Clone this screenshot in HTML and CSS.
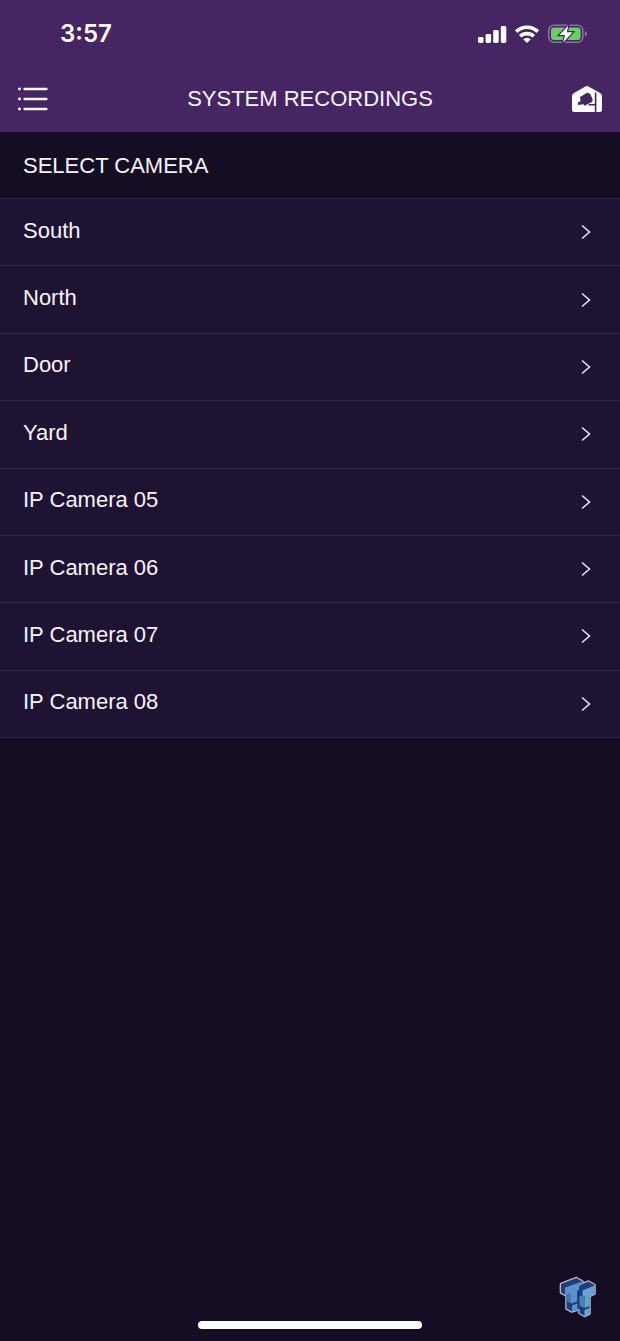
FILE: index.html
```html
<!DOCTYPE html>
<html lang="en">
<head>
<meta charset="utf-8">
<meta name="viewport" content="width=device-width, initial-scale=1">
<title>System Recordings</title>
<link rel="stylesheet" href="styles.css">
</head>
<body>
<div class="screen">
  <header class="top">
    <div class="status">
      <time class="clock">3:57</time>
      <svg class="status-icons" width="110" height="24" viewBox="0 0 110 24" aria-hidden="true">
        <g fill="#fff">
          <rect x="0" y="15" width="5.500" height="6" rx="1.400"/>
          <rect x="7.600" y="12" width="5.500" height="9" rx="1.400"/>
          <rect x="15.200" y="8" width="5.500" height="13" rx="1.400"/>
          <rect x="22.800" y="4" width="5.500" height="17" rx="1.400"/>
        </g>
        <g fill="none" stroke="#fff" stroke-width="3.600">
          <path d="M38.200 9.600A15.500 15.500 0 0 1 59.800 9.600"/>
          <path d="M42.200 14.300A10 10 0 0 1 55.800 14.300"/>
        </g>
        <path d="M49 21L45.200 17.200Q49 14.200 52.800 17.200Z" fill="#fff"/>
        <rect x="70.800" y="3.300" width="34" height="17" rx="5" fill="none" stroke="#8b76a0" stroke-width="1.500"/>
        <rect x="73" y="5.500" width="29.600" height="12.600" rx="3" fill="#63d25f"/>
        <path d="M106.800 9q2.200.500 2.200 2.800t-2.200 2.800z" fill="#8b76a0"/>
        <path d="M90.300 3.600L81.500 13H87L85.300 20.600L94.600 10.300H88.800Z" fill="#fff" stroke="#452562" stroke-width="2.400" paint-order="stroke"/>
      </svg>
    </div>
    <div class="nav">
      <button class="icon-button" aria-label="Menu">
        <svg width="30" height="26" viewBox="0 0 30 26">
          <g fill="#fff"><circle cx="1.500" cy="3" r="1.400"/><circle cx="1.500" cy="13" r="1.400"/><circle cx="1.500" cy="23" r="1.400"/></g>
          <path d="M6.500 3H28.500M6.500 13H28.500M6.500 23H28.500" stroke="#fff" stroke-width="2.300" stroke-linecap="round"/>
        </svg>
      </button>
      <h1 class="title">SYSTEM RECORDINGS</h1>
      <button class="icon-button" aria-label="Home cameras">
        <svg width="30" height="28" viewBox="0 0 30 28">
          <path d="M2 8L13.500 1.400Q15 .600 16.500 1.400L28 8Q30 9.200 30 11V25Q30 27 28 27H2Q0 27 0 25V11Q0 9.200 2 8Z" fill="#fff"/>
          <path d="M8 12L15.500 7.500L18.200 9L20.800 14.500L20 17L14.800 19.500L13 21L11.500 19.200L6.200 20L5.800 17.500L8.500 16.200Z" fill="#452562"/>
          <path d="M23.600 7.500V28M16.500 19.700H23.600" stroke="#452562" stroke-width="1.600" fill="none"/>
        </svg>
      </button>
    </div>
  </header>
  <main class="content">
    <h2 class="section-title">SELECT CAMERA</h2>
    <nav class="cameras" aria-label="Cameras">
      <a class="camera" href="#south">South<svg class="chevron" viewBox="0 0 10 16"><path d="M1 1.500L8.500 8L1 14.500"/></svg></a>
      <a class="camera" href="#north">North<svg class="chevron" viewBox="0 0 10 16"><path d="M1 1.500L8.500 8L1 14.500"/></svg></a>
      <a class="camera" href="#door">Door<svg class="chevron" viewBox="0 0 10 16"><path d="M1 1.500L8.500 8L1 14.500"/></svg></a>
      <a class="camera" href="#yard">Yard<svg class="chevron" viewBox="0 0 10 16"><path d="M1 1.500L8.500 8L1 14.500"/></svg></a>
      <a class="camera" href="#ip05">IP Camera 05<svg class="chevron" viewBox="0 0 10 16"><path d="M1 1.500L8.500 8L1 14.500"/></svg></a>
      <a class="camera" href="#ip06">IP Camera 06<svg class="chevron" viewBox="0 0 10 16"><path d="M1 1.500L8.500 8L1 14.500"/></svg></a>
      <a class="camera" href="#ip07">IP Camera 07<svg class="chevron" viewBox="0 0 10 16"><path d="M1 1.500L8.500 8L1 14.500"/></svg></a>
      <a class="camera" href="#ip08">IP Camera 08<svg class="chevron" viewBox="0 0 10 16"><path d="M1 1.500L8.500 8L1 14.500"/></svg></a>
    </nav>
  </main>
  <footer class="bottom">
    <svg class="logo" width="40" height="44" viewBox="0 0 40 44" aria-hidden="true">
      <path d="M3 9L18.500 3L24.500 6.500V9L30.500 6.500L36.500 10V18.500L31.500 21V38.500L26.500 41L21.500 38V34L14 36.500L8.500 33.500V20.500L3 17.500Z" fill="#1b3f80" stroke="#b9b8c4" stroke-width="2.600" stroke-linejoin="round" paint-order="stroke"/>
      <path d="M7 12.500L24.500 6.500V9L21 11.500V15L19 16V26.500L13 28.500V18.500L7 20.500Z" fill="#5b93c6"/>
      <path d="M14 30.500L19.500 28.500V34.500L14 36.500Z" fill="#5b93c6"/>
      <path d="M8.500 20.500L13 18.500V28.500L8.500 26Z" fill="#4379b1"/>
      <path d="M24.500 15.500L36.500 10.500V18.500L31.500 21V31L26.500 33V21L24.500 22Z" fill="#69a3d2"/>
      <path d="M26.500 35L31.500 33V38.500L26.500 41Z" fill="#69a3d2"/>
      <path d="M21.500 20.500L26.500 22V33L21.500 30.500Z" fill="#4b83b9"/>
    </svg>
    <div class="home-bar"></div>
  </footer>
</div>
</body>
</html>
```

FILE: styles.css
```css
* { box-sizing: border-box; }
body {
  margin: 0;
  background: #150d23;
  color: #f8f4fc;
  font-family: "Liberation Sans", Arial, sans-serif;
}
.screen {
  display: flex;
  flex-direction: column;
  min-height: 100vh;
}
.top { background: #452562; }
.status {
  display: flex;
  align-items: center;
  justify-content: space-between;
  height: 66px;
  padding: 2px 32px 0 60px;
}
.clock {
  font: 600 24px/28px Inter, sans-serif;
  color: #fff;
}
.nav {
  display: flex;
  align-items: center;
  justify-content: space-between;
  height: 66px;
  padding: 0 18px;
}
.icon-button {
  display: flex;
  padding: 0;
  border: 0;
  background: none;
}
.title, .section-title {
  margin: 0;
  font-size: 22px;
  font-weight: 400;
  line-height: 26px;
}
.section-title { padding: 21px 23px 19px; }
.cameras {
  display: grid;
  grid-auto-rows: 1fr;
  min-height: 540px;
  border-top: 1px solid #35254c;
}
.camera {
  display: flex;
  align-items: center;
  justify-content: space-between;
  padding: 0 29px 3px 23px;
  border-bottom: 1px solid #35254c;
  background: #1f1333;
  color: inherit;
  font-size: 22px;
  line-height: 26px;
  text-decoration: none;
}
.chevron {
  width: 10px;
  height: 16px;
  margin-top: 3px;
  fill: none;
  stroke: #eee8f6;
  stroke-width: 1.5;
}
.bottom {
  display: flex;
  flex-direction: column;
  margin-top: auto;
  padding-bottom: 12px;
}
.logo {
  align-self: flex-end;
  margin-right: 22px;
}
.home-bar {
  align-self: center;
  width: 36%;
  height: 8px;
  margin-top: 2px;
  border-radius: 4px;
  background: #fff;
}
```
